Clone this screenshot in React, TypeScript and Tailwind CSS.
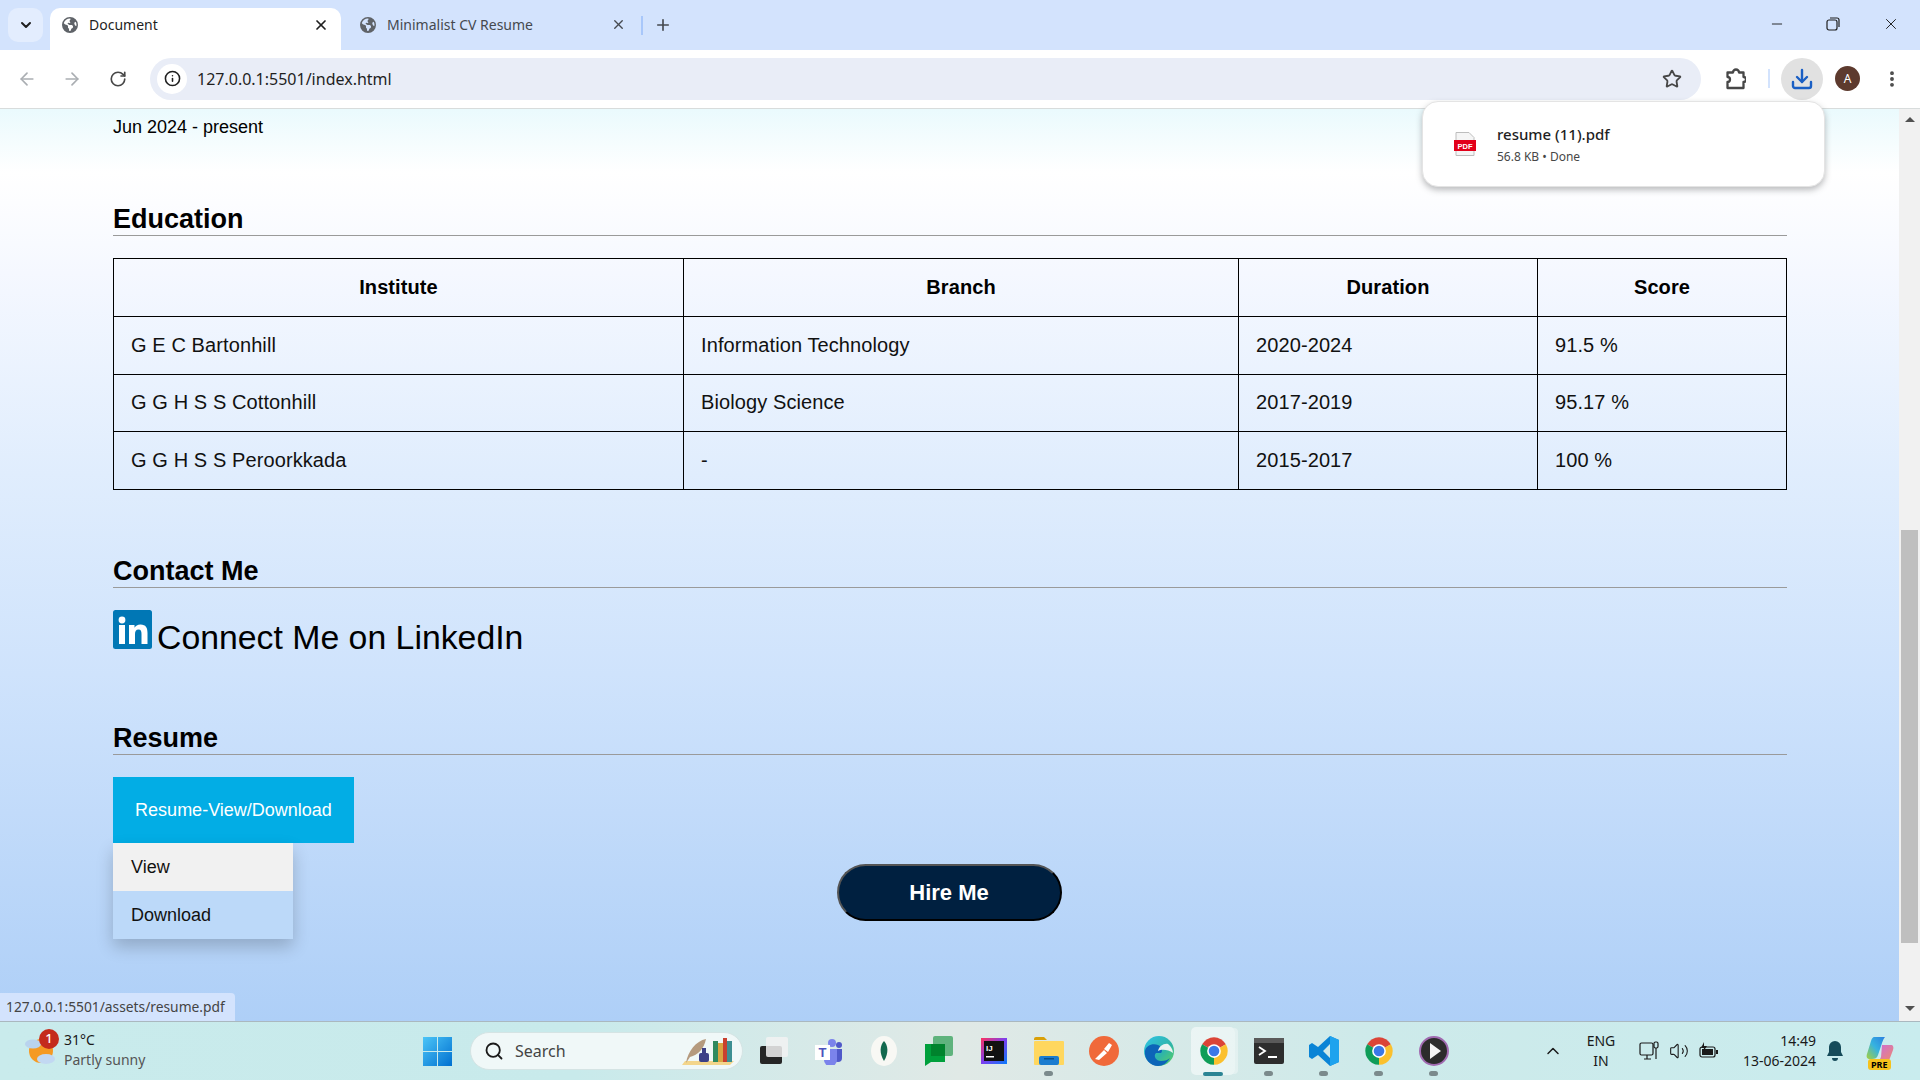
import React from 'react'
import { FaEarthAmericas } from 'react-icons/fa6'
import { ArrowLeft, ArrowRight, ChevronDown, ChevronUp, Download, EllipsisVertical, Info, Minus, Plus, RotateCw, Search, Star, Volume2, X } from 'lucide-react'

const UI_FONT = "font-['Noto_Sans','Open_Sans',sans-serif]"

const EDUCATION = [
  { institute: 'G E C Bartonhill', branch: 'Information Technology', duration: '2020-2024', score: '91.5 %', height: 'h-[58px]' },
  { institute: 'G G H S S Cottonhill', branch: 'Biology Science', duration: '2017-2019', score: '95.17 %', height: 'h-[57px]' },
  { institute: 'G G H S S Peroorkkada', branch: '-', duration: '2015-2017', score: '100 %', height: 'h-[58px]' },
]

function ChromeLogo() {
  return (
    <svg width="30" height="30" viewBox="0 0 48 48">
      <path d="M24 24L5 13A22 22 0 0 1 43 13z" fill="#db4437" />
      <path d="M24 24L43 13A22 22 0 0 1 24 46z" fill="#fbc02d" />
      <path d="M24 24L24 46A22 22 0 0 1 5 13z" fill="#0f9d58" />
      <circle cx="24" cy="24" r="11" fill="#fff" />
      <circle cx="24" cy="24" r="8.500" fill="#3b78e7" />
    </svg>
  )
}

function TaskIcon({ children, dot, active }: { children: React.ReactNode; dot?: boolean; active?: boolean }) {
  return (
    <div className="relative flex h-[48px] w-[55px] shrink-0 items-center justify-center">
      {active && <div className="absolute left-[5px] top-0 h-[48px] w-[44px] rounded-[5px] bg-white/50 shadow-[4px_0_0_-1px_rgba(255,255,255,0.35)]" />}
      <div className="relative">{children}</div>
      {dot && <div className="absolute bottom-[-1px] left-[23px] h-[5px] w-[9px] rounded-full bg-[#7b8a8c]" />}
      {active && <div className="absolute bottom-[-1px] left-[17px] h-[4px] w-[20px] rounded-full bg-[#2b8494]" />}
    </div>
  )
}

function ChromeBar() {
  return (
    <header className={`shrink-0 ${UI_FONT}`}>
      <div className="flex h-[50px] items-end bg-[#d3e3fd]">
        <div className="mb-[8px] ml-[8px] flex h-[34px] w-[35px] items-center justify-center rounded-[10px] bg-[#e3edfe]">
          <ChevronDown size={16} strokeWidth={3} className="text-[#1f1f1f]" />
        </div>
        <div className="ml-[7px] flex h-[42px] w-[291px] items-center rounded-t-[10px] bg-white pb-[9px] pl-[12px] text-[14px] text-[#1f1f1f]">
          <FaEarthAmericas size={16} className="text-[#5f6368]" />
          <span className="ml-[11px]">Document</span>
          <X size={16} strokeWidth={2.6} className="ml-auto mr-[12px]" />
        </div>
        <div className="flex h-[42px] w-[300px] items-center pb-[9px] pl-[19px] text-[14px] text-[#45494f]">
          <FaEarthAmericas size={16} className="text-[#5f6368]" />
          <span className="ml-[11px]">Minimalist CV Resume</span>
          <X size={15} strokeWidth={2.2} className="ml-auto mr-[15px]" />
        </div>
        <div className="mb-[15px] h-[19px] w-[2px] bg-[#a8c7fa]" />
        <Plus size={18} strokeWidth={2.2} className="mb-[16px] ml-[11px] text-[#45494f]" />
        <div className="ml-auto flex h-[50px] items-center self-start pb-[2px] text-[#1f1f1f]">
          <Minus size={16} strokeWidth={1.4} className="mr-[41px]" />
          <svg width="14" height="14" viewBox="0 0 14 14" fill="none" stroke="currentColor" strokeWidth="1.2" className="mr-[42px]">
            <rect x="1" y="3" width="10" height="10" rx="2" />
            <path d="M4 1h7a2 2 0 0 1 2 2v7" />
          </svg>
          <X size={18} strokeWidth={1.3} className="mr-[20px]" />
        </div>
      </div>
      <div className="flex h-[59px] items-center rounded-t-[10px] border-b border-[#d8dcdc] bg-white pb-[1px]">
        <ArrowLeft size={20} strokeWidth={2} className="ml-[17px] text-[#aaaeb2]" />
        <ArrowRight size={20} strokeWidth={2} className="ml-[25px] text-[#aaaeb2]" />
        <RotateCw size={18} strokeWidth={2.2} className="ml-[27px] text-[#474747]" />
        <div className="ml-[23px] flex h-[42px] w-[1551px] items-center rounded-full bg-[#e9edf7] pl-[7px] pr-[19px]">
          <div className="flex h-[30px] w-[30px] items-center justify-center rounded-full bg-white">
            <Info size={17} strokeWidth={2.2} className="text-[#1f1f1f]" />
          </div>
          <span className="ml-[10px] pt-[1px] text-[16px] text-[#1f1f1f]">127.0.0.1:5501/index.html</span>
          <Star size={20} strokeWidth={2.2} className="ml-auto text-[#474747]" />
        </div>
        <svg width="20" height="22" viewBox="0 0 20 22" fill="none" stroke="#474747" strokeWidth="2.300" strokeLinejoin="round" className="ml-[25px]">
          <path d="M1.500 4.500H7a3 3 0 0 1 6 0h4.500V9a2.500 2.500 0 0 1 0 5v6H1.500v-6a2.500 2.500 0 0 0 0-5z" />
        </svg>
        <div className="ml-[22px] h-[19px] w-[2px] bg-[#d3e3fd]" />
        <div className="ml-[11px] flex h-[42px] w-[42px] items-center justify-center rounded-full bg-[#e1e1e1]">
          <Download size={24} strokeWidth={2.4} className="text-[#1a5fc4]" />
        </div>
        <div className="ml-[12px] flex h-[25px] w-[25px] items-center justify-center rounded-full bg-[#5d3a2e] text-[12px] text-white">A</div>
        <EllipsisVertical size={20} strokeWidth={2.6} className="ml-[22px] text-[#474747]" />
      </div>
    </header>
  )
}

function DownloadBubble() {
  return (
    <div className={`absolute left-[1422px] top-[101px] flex h-[86px] w-[403px] items-center rounded-[16px] border border-[#e4e4e4] bg-white pl-[31px] shadow-[0_3px_6px_rgba(60,64,67,0.35)] ${UI_FONT}`}>
      <svg width="22" height="24" viewBox="0 0 22 24">
        <path d="M2 .5h13l5 5v18H2z" fill="#f5f5f5" stroke="#bdbdbd" />
        <rect x="0" y="8" width="22" height="11" fill="#e2001a" />
        <text x="11" y="16.500" textAnchor="middle" fontSize="7.500" fontWeight="700" fill="#fff" fontFamily="Liberation Sans">PDF</text>
      </svg>
      <div className="ml-[21px]">
        <div className="text-[15px] font-medium leading-[20px] text-[#1f1f1f]">resume (11).pdf</div>
        <div className="mt-[5px] text-[12px] leading-[16px] text-[#474747]">56.8 KB • Done</div>
      </div>
    </div>
  )
}

function SectionTitle({ children }: { children: React.ReactNode }) {
  return <h2 className="border-b border-[#9a9a9a] text-[27px] font-bold leading-[31px] text-black">{children}</h2>
}

function PageContent() {
  return (
    <main className="relative flex min-h-0 flex-1 font-['Liberation_Sans',Arial,sans-serif]">
      <div className="flex flex-1 flex-col overflow-hidden bg-[linear-gradient(180deg,#eafafd_0%,#ffffff_7%,#f5f8ff_18%,#e0edfd_40%,#cfe3fc_62%,#aecff7_100%)] pl-[113px] pr-[112px] pt-[8px]">
        <p className="text-[18px] leading-[20px] text-black">Jun 2024 - present</p>
        <div className="mt-[67px]">
          <SectionTitle>Education</SectionTitle>
        </div>
        <table className="mt-[22px] w-full table-fixed border-collapse border border-black text-[20px] tracking-[0.1px] text-[#111]">
          <colgroup>
            <col className="w-[570px]" />
            <col className="w-[555px]" />
            <col className="w-[299px]" />
            <col />
          </colgroup>
          <thead>
            <tr className="h-[58px]">
              {['Institute', 'Branch', 'Duration', 'Score'].map((h) => (
                <th key={h} className="border border-black pb-[2px] text-center font-bold text-black">
                  {h}
                </th>
              ))}
            </tr>
          </thead>
          <tbody>
            {EDUCATION.map((row) => (
              <tr key={row.institute} className={row.height}>
                <td className="border border-black px-[17px] pb-[2px]">{row.institute}</td>
                <td className="border border-black px-[17px] pb-[2px]">{row.branch}</td>
                <td className="border border-black px-[17px] pb-[2px]">{row.duration}</td>
                <td className="border border-black px-[17px] pb-[2px]">{row.score}</td>
              </tr>
            ))}
          </tbody>
        </table>
        <div className="mt-[66px]">
          <SectionTitle>Contact Me</SectionTitle>
        </div>
        <div className="mt-[22px] flex items-baseline gap-[5px]">
          <svg width="39" height="39" viewBox="0 0 39 39">
            <rect width="39" height="39" rx="2.500" fill="#0077b5" />
            <circle cx="9" cy="10" r="3.400" fill="#fff" />
            <rect x="6" y="15" width="6" height="19" fill="#fff" />
            <path d="M16 15h5.500v2.800c1-1.800 3-3.200 6-3.200 5.500 0 7 3.500 7 8.500V34h-6V24c0-2.500-.5-4.500-3-4.500s-3.500 2-3.500 4.500v10h-6z" fill="#fff" />
          </svg>
          <a className="text-[33.8px] leading-[39px] text-black">Connect Me on LinkedIn</a>
        </div>
        <div className="mt-[66px]">
          <SectionTitle>Resume</SectionTitle>
        </div>
        <div className="relative mt-[22px] self-start">
          <button className="h-[66px] w-[241px] bg-[#02ade5] text-center text-[18px] text-white">Resume-View/Download</button>
          <div className="absolute left-0 top-[66px] w-[180px] text-[18px] text-[#111] shadow-[0_8px_16px_rgba(0,0,0,0.2)]">
            <div className="flex h-[48px] items-center bg-[#f1f1f1] pl-[18px]">View</div>
            <div className="flex h-[48px] items-center bg-[#bcd9f9] pl-[18px]">Download</div>
          </div>
        </div>
        <button className="mr-[2px] mt-[21px] h-[57px] w-[225px] self-center rounded-full border-2 border-b-black border-l-[#555] border-r-black border-t-[#555] bg-[#002040] text-[22px] font-bold text-white">Hire Me</button>
      </div>
      <div className="relative flex w-[21px] shrink-0 flex-col items-center bg-[#f1f1f1] text-[#505050]">
        <div className="mt-[8px] h-0 w-0 border-x-[5px] border-b-[5px] border-x-transparent border-b-[#505050]" />
        <div className="mt-[408px] h-[413px] w-[17px] bg-[#bfbfbf]" />
        <div className="mt-[63px] h-0 w-0 border-x-[5px] border-t-[5px] border-x-transparent border-t-[#505050]" />
      </div>
      <div className="absolute bottom-0 left-0 flex h-[28px] w-[235px] items-center rounded-tr-[4px] bg-[#d3e3fd] pl-[6px] font-['Noto_Sans',sans-serif] text-[13.8px] text-[#444]">
        127.0.0.1:5501/assets/resume.pdf
      </div>
    </main>
  )
}

function Taskbar() {
  return (
    <footer className={`flex h-[59px] shrink-0 items-center border-t border-[#aab8bf] bg-[linear-gradient(90deg,#c9ebec_0%,#c8eaeb_30%,#e0e9e6_50%,#cdeaea_72%,#c9ecee_100%)] ${UI_FONT}`}>
      <div className="mb-[2px] flex w-[423px] shrink-0 items-center pl-[25px]">
        <div className="relative h-[34px] w-[30px]">
          <svg width="30" height="34" viewBox="0 0 30 34">
            <circle cx="16" cy="18" r="12" fill="#f59a23" />
            <ellipse cx="8" cy="11" rx="8" ry="4.500" fill="#b9d3ee" />
            <ellipse cx="21" cy="26" rx="9" ry="5" fill="#c2d8f2" />
          </svg>
          <div className="absolute left-[14px] top-[-4px] flex h-[20px] w-[20px] items-center justify-center rounded-full bg-[#c42b1c] text-[13px] font-medium text-white">1</div>
        </div>
        <div className="ml-[9px] text-[14px] leading-[20px]">
          <div className="text-[#1a1a1a]">31°C</div>
          <div className="text-[#555]">Partly sunny</div>
        </div>
      </div>
      <svg width="29" height="29" viewBox="0 0 29 29" className="shrink-0">
        <defs>
          <linearGradient id="win" x1="0" y1="0" x2="1" y2="1">
            <stop offset="0" stopColor="#4cc5f7" />
            <stop offset="1" stopColor="#0070d0" />
          </linearGradient>
        </defs>
        <path d="M0 0h14v14H0zM15 0h14v14H15zM0 15h14v14H0zM15 15h14v14H15z" fill="url(#win)" />
      </svg>
      <div className="ml-[18px] flex h-[38px] w-[273px] shrink-0 items-center rounded-full border border-[#d5e4e4] bg-[#f0f8f8] pl-[13px]">
        <Search size={20} strokeWidth={2.2} className="text-[#1a1a1a]" />
        <span className="ml-[11px] text-[16px] text-[#444]">Search</span>
        <svg width="55" height="32" viewBox="0 0 55 32" className="ml-auto mr-[5px]">
          <path d="M0 30 L48 30 L52 26 L3 26z" fill="#f3d58b" />
          <path d="M4 28C6 16 14 6 24 4 22 14 16 20 8 22z" fill="#b59a7e" />
          <rect x="17" y="18" width="10" height="9" rx="2" fill="#3c3f86" />
          <rect x="20" y="13" width="4" height="6" fill="#3c3f86" />
          <rect x="31" y="6" width="5" height="21" fill="#2f8a5f" />
          <rect x="36" y="8" width="5" height="19" fill="#d9a441" />
          <rect x="41" y="3" width="4" height="24" fill="#c8402f" />
          <rect x="45" y="6" width="5" height="21" fill="#3d8f92" />
        </svg>
      </div>
      <div className="ml-[3px] flex shrink-0">
        <TaskIcon>
          <svg width="28" height="28" viewBox="0 0 28 28">
            <rect x="0" y="9" width="22" height="18" rx="2" fill="#262626" />
            <rect x="6" y="0" width="22" height="20" rx="2" fill="#f2f2f2" opacity="0.85" />
          </svg>
        </TaskIcon>
        <TaskIcon>
          <svg width="28" height="28" viewBox="0 0 28 28">
            <circle cx="17" cy="6" r="4" fill="#7b83eb" />
            <circle cx="24" cy="8" r="3" fill="#5059c9" />
            <path d="M19 12h8v9a4 4 0 0 1-8 0z" fill="#5059c9" />
            <path d="M9 12h13v11a6 6 0 0 1-13 0z" fill="#7b83eb" />
            <rect x="0" y="8" width="15" height="15" fill="#fff" />
            <text x="7.500" y="20" textAnchor="middle" fontSize="13" fontWeight="700" fill="#4b53bc" fontFamily="Liberation Sans">T</text>
          </svg>
        </TaskIcon>
        <TaskIcon>
          <svg width="28" height="30" viewBox="0 0 28 30">
            <ellipse cx="14" cy="15" rx="13" ry="15" fill="#f8f8f4" />
            <path d="M14 5c4 4 5 12 0 20-5-8-4-16 0-20z" fill="#12694e" />
          </svg>
        </TaskIcon>
        <TaskIcon>
          <svg width="28" height="30" viewBox="0 0 28 30">
            <rect x="8" y="0" width="20" height="20" rx="2" fill="#5fb37d" />
            <path d="M0 8h20v18H6l-6 4z" fill="#00a03c" />
            <rect x="6" y="8" width="14" height="12" fill="#00832d" />
          </svg>
        </TaskIcon>
        <TaskIcon>
          <svg width="26" height="26" viewBox="0 0 26 26">
            <defs>
              <linearGradient id="ij" x1="0" y1="0" x2="1" y2="1">
                <stop offset="0" stopColor="#fe315d" />
                <stop offset="0.5" stopColor="#7a3ff0" />
                <stop offset="1" stopColor="#087cfa" />
              </linearGradient>
            </defs>
            <rect width="26" height="26" fill="url(#ij)" />
            <rect x="3" y="3" width="20" height="20" fill="#111" />
            <text x="5" y="13" fontSize="8" fontWeight="700" fill="#fff" fontFamily="Liberation Sans">IJ</text>
            <rect x="5" y="18" width="8" height="1.500" fill="#fff" />
          </svg>
        </TaskIcon>
        <TaskIcon dot>
          <svg width="30" height="28" viewBox="0 0 30 28">
            <path d="M0 2a2 2 0 0 1 2-2h8l3 3h-13z" fill="#d9a008" />
            <rect x="0" y="4" width="30" height="24" rx="1" fill="#ffd75e" />
            <rect x="5" y="19" width="20" height="9" rx="2" fill="#1b7ccf" />
            <rect x="10" y="21" width="10" height="1.500" fill="#0b4f8a" />
          </svg>
        </TaskIcon>
        <TaskIcon>
          <svg width="30" height="30" viewBox="0 0 30 30">
            <circle cx="15" cy="15" r="15" fill="#f0693a" />
            <path d="M6 23L15 14l3 3-8 7zM15 13l5-6 3 2-4 7z" fill="#fff" />
          </svg>
        </TaskIcon>
        <TaskIcon>
          <svg width="30" height="30" viewBox="0 0 30 30">
            <defs>
              <linearGradient id="edge" x1="0" y1="0" x2="1" y2="1">
                <stop offset="0" stopColor="#2fc3e7" />
                <stop offset="0.6" stopColor="#2fb5a8" />
                <stop offset="1" stopColor="#5fd35a" />
              </linearGradient>
            </defs>
            <circle cx="15" cy="15" r="15" fill="url(#edge)" />
            <path d="M1 15c1-6 8-8 13-6 4 2 5 6 3 8h-5c-3 3 0 8 5 8 4 0 7-1 9-3-3 5-7 8-12 8C6 30 0 23 1 15z" fill="#0c64b8" />
            <path d="M14 15c3-2 10-2 15 2 0-2-1-6-5-9-4-1-9 2-10 7z" fill="#e9f3f1" />
          </svg>
        </TaskIcon>
        <TaskIcon active>
          <ChromeLogo />
        </TaskIcon>
        <TaskIcon dot>
          <svg width="30" height="26" viewBox="0 0 30 26">
            <rect width="30" height="26" rx="2" fill="#2d2d2d" />
            <rect width="30" height="5" fill="#5a5a5a" />
            <path d="M5 9l6 4-6 4" fill="none" stroke="#fff" strokeWidth="1.800" />
            <rect x="14" y="18" width="9" height="2" fill="#fff" />
          </svg>
        </TaskIcon>
        <TaskIcon dot>
          <svg width="30" height="30" viewBox="0 0 30 30">
            <path d="M21 0l9 4v22l-9 4-12-11-6 4-3-2v-12l3-2 6 4zM21 8l-7 7 7 7z" fill="#0a84d6" />
            <path d="M21 0l9 4v22l-9 4z" fill="#1fa3ee" />
          </svg>
        </TaskIcon>
        <TaskIcon dot>
          <ChromeLogo />
        </TaskIcon>
        <TaskIcon dot>
          <svg width="30" height="30" viewBox="0 0 30 30">
            <circle cx="15" cy="15" r="14" fill="#2c2c2c" stroke="#a06ab0" strokeWidth="2" />
            <path d="M11 7l11 8-11 8z" fill="#f4f4f4" />
          </svg>
        </TaskIcon>
      </div>
      <div className="ml-auto flex shrink-0 items-center pr-[14px] text-[#1a1a1a]">
        <div className="flex w-[30px] justify-center">
          <ChevronUp size={20} strokeWidth={1.8} />
        </div>
        <div className="w-[66px] text-center text-[14px] leading-[20px]">
          <div>ENG</div>
          <div>IN</div>
        </div>
        <div className="flex w-[30px] justify-center">
          <svg width="20" height="20" viewBox="0 0 20 20" fill="none" stroke="currentColor" strokeWidth="1.200">
            <rect x="1" y="2" width="13" height="12" rx="1.500" />
            <path d="M5 18h7M8 14v4" />
            <rect x="15" y="1" width="4" height="6" rx="1.500" fill="#c9ecee" />
            <path d="M17 7v11" />
          </svg>
        </div>
        <div className="flex w-[30px] justify-center">
          <Volume2 size={20} strokeWidth={1.3} />
        </div>
        <div className="flex w-[30px] justify-center">
          <svg width="20" height="18" viewBox="0 0 20 18">
            <rect x="1" y="5" width="15" height="10" rx="2" fill="none" stroke="currentColor" strokeWidth="1.200" />
            <rect x="3" y="7" width="11" height="6" fill="currentColor" />
            <rect x="17" y="8" width="2" height="4" fill="currentColor" />
            <path d="M5 0L2 6h3l-1 4 4-6H5z" fill="currentColor" />
          </svg>
        </div>
        <div className="w-[92px] text-right text-[14px] leading-[20px]">
          <div>14:49</div>
          <div>13-06-2024</div>
        </div>
        <div className="flex w-[38px] justify-center">
          <svg width="16" height="20" viewBox="0 0 16 20" fill="#164b5a">
            <path d="M8 0a6 6 0 0 1 6 6v5l2 4H0l2-4V6a6 6 0 0 1 6-6zM5 17h6a3 3 0 0 1-6 0z" />
          </svg>
        </div>
        <div className="relative flex w-[52px] justify-center">
          <svg width="28" height="28" viewBox="0 0 28 28">
            <defs>
              <linearGradient id="cop1" x1="0" y1="1" x2="1" y2="0">
                <stop offset="0" stopColor="#a6d13c" />
                <stop offset="0.5" stopColor="#36b3e0" />
                <stop offset="1" stopColor="#2b7fe0" />
              </linearGradient>
              <linearGradient id="cop2" x1="0" y1="0" x2="1" y2="1">
                <stop offset="0" stopColor="#c86ce0" />
                <stop offset="1" stopColor="#f08a6a" />
              </linearGradient>
            </defs>
            <path d="M8 0h11c-1 1-2 3-3 6l-4 12c-1 3-3 4-6 4H4c-3 0-4-2-3-5L5 4c1-3 2-4 3-4z" fill="url(#cop1)" />
            <path d="M16 8h9c2 0 3 2 2 5l-3 8c-1 3-3 4-5 4H9c3 0 5-2 6-5z" fill="url(#cop2)" />
          </svg>
          <div className="absolute bottom-[-5px] left-[14px] rounded-[3px] bg-[#f6c21c] px-[3px] text-[9px] font-bold leading-[11px] text-black">PRE</div>
        </div>
      </div>
    </footer>
  )
}

export default function App() {
  return (
    <div className="relative flex h-[1080px] w-[1920px] flex-col overflow-hidden">
      <ChromeBar />
      <PageContent />
      <Taskbar />
      <DownloadBubble />
    </div>
  )
}
